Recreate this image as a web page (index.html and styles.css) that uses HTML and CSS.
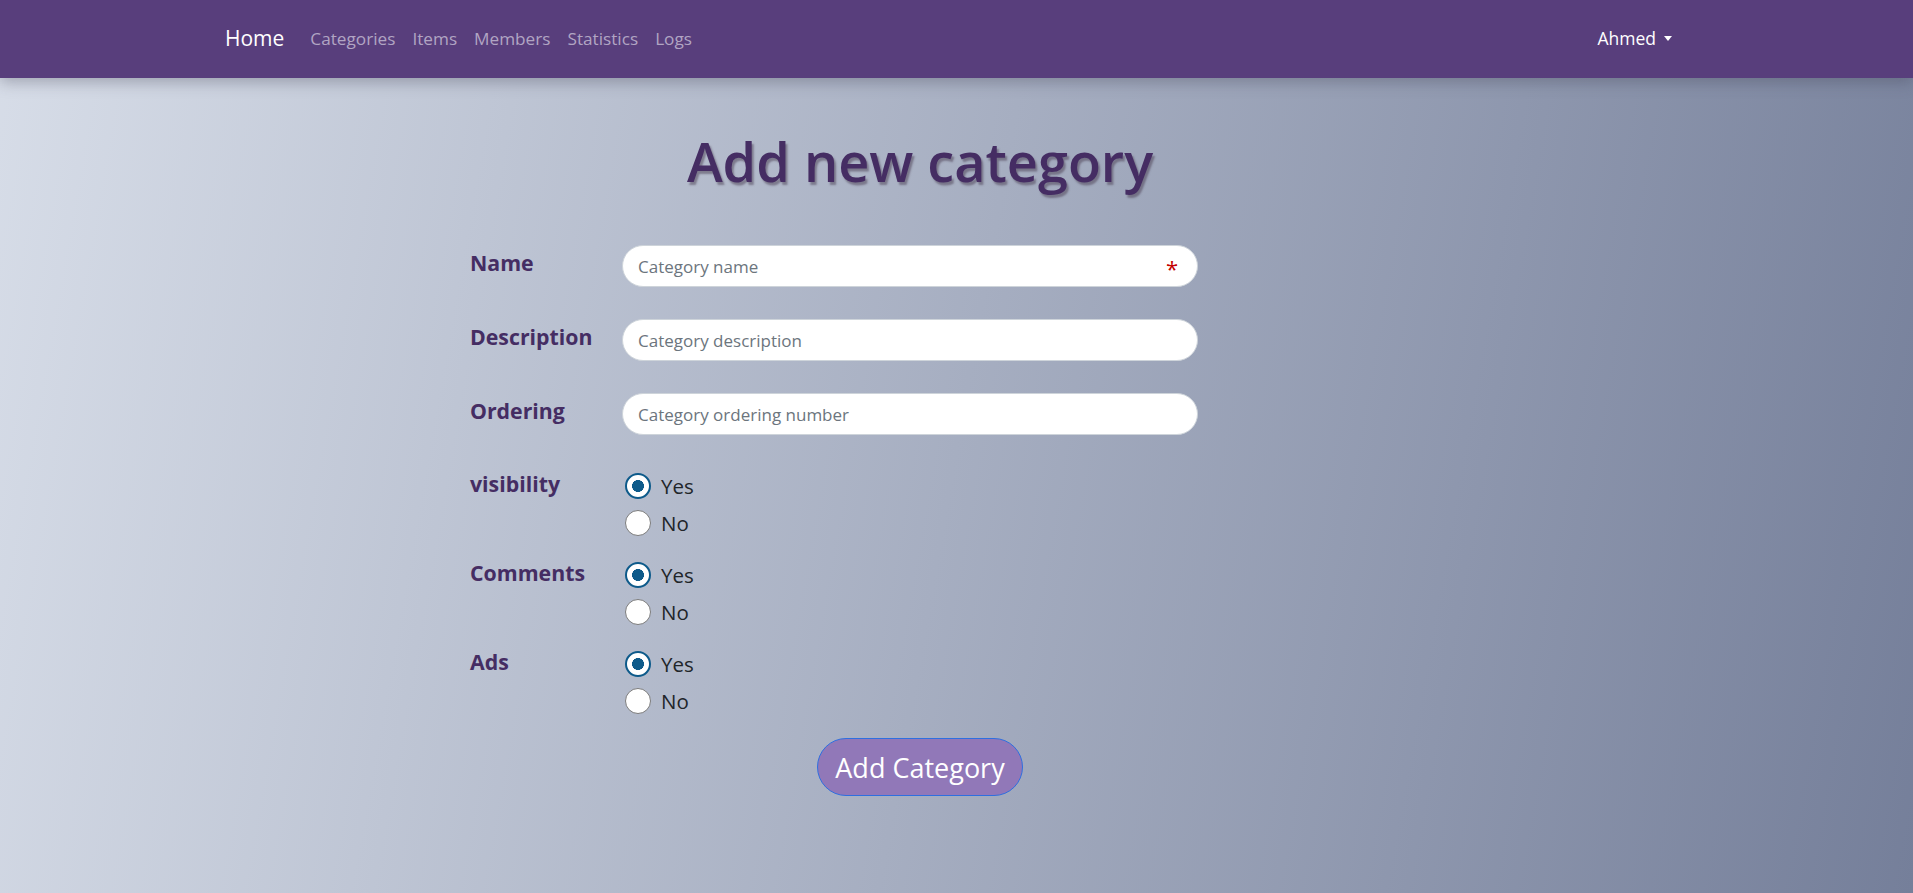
FILE: index.html
```html
<!DOCTYPE html>
<html lang="en">
<head>
<meta charset="utf-8">
<title>Add new category</title>
<link rel="stylesheet" href="styles.css">
</head>
<body>
<nav class="navbar">
  <div class="nav-inner">
    <a class="brand" href="#">Home</a>
    <ul class="nav-links">
      <li><a href="#">Categories</a></li>
      <li><a href="#">Items</a></li>
      <li><a href="#">Members</a></li>
      <li><a href="#">Statistics</a></li>
      <li><a href="#">Logs</a></li>
    </ul>
    <a class="user" href="#">Ahmed <span class="caret"></span></a>
  </div>
</nav>
<main class="page">
  <h1 class="title">Add new category</h1>
  <form class="form">
    <div class="row">
      <label class="label">Name</label>
      <div class="field">
        <input class="input" type="text" placeholder="Category name">
        <span class="asterisk">*</span>
      </div>
    </div>
    <div class="row">
      <label class="label">Description</label>
      <div class="field"><input class="input" type="text" placeholder="Category description"></div>
    </div>
    <div class="row">
      <label class="label">Ordering</label>
      <div class="field"><input class="input" type="text" placeholder="Category ordering number"></div>
    </div>
    <div class="row radio-row first-radio">
      <label class="label">visibility</label>
      <div class="radios">
        <label class="check"><input type="radio" name="vis" checked><span>Yes</span></label>
        <label class="check"><input type="radio" name="vis"><span>No</span></label>
      </div>
    </div>
    <div class="row radio-row">
      <label class="label">Comments</label>
      <div class="radios">
        <label class="check"><input type="radio" name="com" checked><span>Yes</span></label>
        <label class="check"><input type="radio" name="com"><span>No</span></label>
      </div>
    </div>
    <div class="row radio-row last-radio">
      <label class="label">Ads</label>
      <div class="radios">
        <label class="check"><input type="radio" name="ads" checked><span>Yes</span></label>
        <label class="check"><input type="radio" name="ads"><span>No</span></label>
      </div>
    </div>
    <div class="actions">
      <button class="btn" type="button">Add Category</button>
    </div>
  </form>
</main>
</body>
</html>
```
FILE: styles.css
```css
* { box-sizing: border-box; }
html, body { margin: 0; height: 100%; }
body {
  font-family: "Open Sans", "Noto Sans", sans-serif;
  background: linear-gradient(100deg, #d7dde8 0%, #757f9a 100%);
  color: #212529;
  min-height: 893px;
}
.navbar {
  background: #583e7c;
  height: 78px;
  box-shadow: 0 4px 14px rgba(60, 60, 80, 0.35);
  position: relative;
}
.nav-inner {
  display: flex;
  align-items: center;
  height: 100%;
  padding: 0 241px 2px 225px;
}
.nav-inner a { text-decoration: none; }
.brand {
  color: #fff;
  font-size: 21px;
  margin-right: 26px;
}
.nav-links {
  display: flex;
  list-style: none;
  margin: 0;
  padding: 0;
  gap: 17px;
  flex: 1;
}
.nav-links a {
  color: #b1a5c3;
  font-size: 17.2px;
}
.user {
  color: #fff;
  font-size: 17.5px;
  display: flex;
  align-items: center;
}
.caret {
  display: inline-block;
  margin-left: 8px;
  border-left: 4.5px solid transparent;
  border-right: 4.5px solid transparent;
  border-top: 5px solid #fff;
}
.page {
  width: 900px;
  margin-left: 470px;
}
.title {
  margin: 0;
  padding-top: 56px;
  text-align: center;
  font-size: 54px;
  font-weight: 600;
  line-height: 1;
  color: #452d63;
  text-shadow: 2px 3px 2px rgba(80, 70, 90, 0.55);
}
.form {
  margin-top: 57px;
  display: flex;
  flex-direction: column;
}
.row {
  display: flex;
  align-items: flex-start;
  margin-bottom: 32px;
}
.label {
  width: 152px;
  flex: none;
  font-size: 21.3px;
  font-weight: 700;
  color: #452d63;
  padding-top: 3px;
}
.field {
  position: relative;
  width: 576px;
}
.input {
  display: block;
  width: 100%;
  height: 42px;
  border: 1px solid #ced4da;
  border-radius: 21px;
  background: #fff;
  padding: 0 15px;
  font-family: inherit;
  font-size: 17px;
  color: #212529;
  outline: none;
}
.input::placeholder { color: #6c757d; }
.asterisk {
  position: absolute;
  right: 20px;
  top: 12px;
  color: #c40000;
  font-size: 22px;
  line-height: 1;
}
.radio-row { margin-bottom: 26px; }
.first-radio { margin-top: 6px; }
.last-radio { margin-bottom: 24px; }
.radio-row .label {
  padding-top: 0;
  line-height: 22px;
}
.radios {
  display: flex;
  flex-direction: column;
  gap: 11px;
}
.check {
  display: flex;
  align-items: center;
  gap: 10px;
  font-size: 20.5px;
  color: #212529;
  line-height: 26px;
}
.check input {
  appearance: none;
  -webkit-appearance: none;
  margin: 0 0 0 3px;
  width: 26px;
  height: 26px;
  border-radius: 50%;
  background: #fff;
  border: 1px solid #7c7c7c;
}
.check input:checked {
  border: 2px solid #0d5a8a;
  background: radial-gradient(circle closest-side, #0d5a8a 0 52%, #fff 56%);
}
.actions {
  display: flex;
  justify-content: center;
}
.btn {
  font-family: inherit;
  font-size: 27px;
  color: #fff;
  background: #9178b8;
  border: 1px solid #2f6fe0;
  border-radius: 29px;
  height: 58px;
  padding: 0 17px;
}
```
